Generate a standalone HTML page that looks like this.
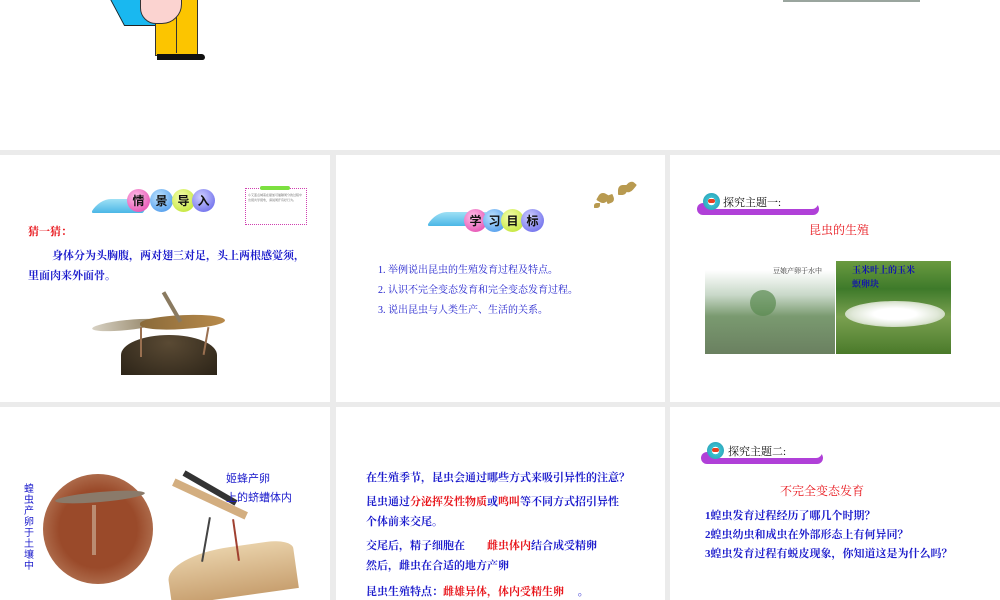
<!DOCTYPE html>
<html><head><meta charset="utf-8"><style>
*{margin:0;padding:0;box-sizing:border-box}
body{width:1000px;height:600px;overflow:hidden;background:#ebebeb;position:relative;font-family:"Liberation Serif","Noto Serif CJK SC","Noto Sans CJK SC",serif}
.c{position:absolute;background:#fff;overflow:hidden}
.a{position:absolute;white-space:nowrap}
.blue{color:#1c1ccc}
.red{color:#e8161c}
.b{font-weight:bold}
.ball{position:absolute;width:23px;height:23px;border-radius:50%;font:bold 12px "Noto Sans CJK SC",sans-serif;color:#111;text-align:center;line-height:23px}
.book{position:absolute;width:52px;height:14px;background:linear-gradient(180deg,#9fe0f5,#4bb6e6);border-radius:40px 4px 4px 8px;transform:skewX(-30deg)}
.pill{position:absolute;height:12px;background:#b040d8;border-radius:6px}
.bf{position:absolute;background:#b89a50;border-radius:50% 10% 50% 10%}
</style></head><body>
<div class="c" style="left:0;top:0;width:1000px;height:150px">
<div style="position:absolute;left:112px;top:-20px;width:40px;height:46px;background:#19b8f0;transform:skewX(28deg);border:1px solid #222"></div>
<div style="position:absolute;left:155px;top:0;width:43px;height:56px;background:#fcc500;border:1px solid #333;border-top:none"></div>
<div style="position:absolute;left:176px;top:0;width:1px;height:53px;background:#333"></div>
<div style="position:absolute;left:140px;top:-8px;width:42px;height:32px;background:#fbd3d0;border:1px solid #333;border-radius:0 0 20px 16px"></div>
<div style="position:absolute;left:157px;top:54px;width:48px;height:6px;background:#111;border-radius:0 4px 3px 0"></div>
<div style="position:absolute;left:783px;top:0;width:137px;height:2px;background:#9aa59e"></div>
</div>

<div class="c" style="left:0;top:155px;width:330px;height:247px">
<div class="book" style="left:95px;top:44px"></div>
<div class="ball" style="left:127px;top:34px;background:radial-gradient(circle at 40% 35%,#ffc0e8,#e03aa8)">情</div>
<div class="ball" style="left:150px;top:34px;background:radial-gradient(circle at 40% 35%,#bfe4ff,#3a8ee8)">景</div>
<div class="ball" style="left:172px;top:34px;background:radial-gradient(circle at 40% 35%,#f6ffb0,#b8e020)">导</div>
<div class="ball" style="left:192px;top:34px;background:radial-gradient(circle at 40% 35%,#d0d0ff,#5a5ae8)">入</div>
<div style="position:absolute;left:245px;top:33px;width:62px;height:37px;border:1px dotted #d040b0;font-size:3px;color:#555;padding:4px 2px;line-height:5px">小艾蓝点城着在提加可插隔周分的过程中出现共学现象，请说周汗有好行为。</div>
<div style="position:absolute;left:260px;top:31px;width:30px;height:4px;background:#7ce040;border-radius:2px"></div>
<div class="a red b" style="left:28px;top:68px;font-size:11px">猜一猜：</div>
<div class="a blue b" style="left:52px;top:92px;font-size:11px">身体分为头胸腹，两对翅三对足，头上两根感觉须，</div>
<div class="a blue b" style="left:28px;top:112px;font-size:11px">里面肉来外面骨。</div>
<div style="position:absolute;left:121px;top:180px;width:96px;height:40px;background:radial-gradient(ellipse at 50% 20%,#5a4a34,#2c2418);border-radius:50% 50% 0 0"></div>
<div style="position:absolute;left:92px;top:165px;width:70px;height:10px;background:linear-gradient(90deg,#d8d2c4,#8a7a5a);border-radius:50%;transform:rotate(-6deg)"></div>
<div style="position:absolute;left:140px;top:160px;width:85px;height:14px;background:linear-gradient(90deg,#8a6a3a,#b88a4a);border-radius:40% 60% 40% 50%;transform:rotate(-4deg)"></div>
<div style="position:absolute;left:170px;top:135px;width:4px;height:34px;background:#8a7a60;transform:rotate(-30deg)"></div>
<div style="position:absolute;left:140px;top:172px;width:2px;height:30px;background:#9a7050"></div>
<div style="position:absolute;left:205px;top:172px;width:2px;height:28px;background:#9a7050;transform:rotate(10deg)"></div>
</div>

<div class="c" style="left:336px;top:155px;width:329px;height:247px">
<div class="book" style="left:95px;top:57px"></div>
<div class="ball" style="left:128px;top:54px;background:radial-gradient(circle at 40% 35%,#ffc0e8,#e03aa8)">学</div>
<div class="ball" style="left:147px;top:54px;background:radial-gradient(circle at 40% 35%,#bfe4ff,#3a8ee8)">习</div>
<div class="ball" style="left:165px;top:54px;background:radial-gradient(circle at 40% 35%,#f6ffb0,#b8e020)">目</div>
<div class="ball" style="left:185px;top:54px;background:radial-gradient(circle at 40% 35%,#d0d0ff,#5a5ae8)">标</div>
<div class="bf" style="left:262px;top:38px;width:10px;height:10px;transform:rotate(30deg)"></div>
<div class="bf" style="left:270px;top:40px;width:8px;height:8px;transform:rotate(-20deg)"></div>
<div class="bf" style="left:282px;top:30px;width:9px;height:10px"></div>
<div class="bf" style="left:290px;top:26px;width:8px;height:12px;transform:rotate(40deg)"></div>
<div class="bf" style="left:258px;top:48px;width:6px;height:5px"></div>
<div class="a blue" style="left:42px;top:106px;font-size:10px">1. 举例说出昆虫的生殖发育过程及特点。</div>
<div class="a blue" style="left:42px;top:126px;font-size:10px">2. 认识不完全变态发育和完全变态发育过程。</div>
<div class="a blue" style="left:42px;top:146px;font-size:10px">3. 说出昆虫与人类生产、生活的关系。</div>
</div>

<div class="c" style="left:670px;top:155px;width:330px;height:247px">
<div class="pill" style="left:27px;top:48px;width:122px"></div>
<div style="position:absolute;left:38px;top:40px;width:110px;height:14px;background:#fff;border-radius:6px"></div>
<div style="position:absolute;left:33px;top:38px;width:17px;height:17px;border-radius:50%;background:radial-gradient(circle,#fff 30%,#39c0d0 32%,#2a9ab0);"></div>
<div style="position:absolute;left:38px;top:44px;width:7px;height:4px;background:#e84020;border-radius:2px"></div>
<div class="a" style="left:53px;top:39px;font-size:11px;color:#111">探究主题一:</div>
<div class="a red" style="left:139px;top:66px;font-size:12px">昆虫的生殖</div>
<div style="position:absolute;left:35px;top:115px;width:130px;height:84px;background:linear-gradient(180deg,#fff 0%,#c8d8c8 30%,#7a9a70 55%,#6a8060 100%)"></div>
<div style="position:absolute;left:80px;top:135px;width:26px;height:26px;border-radius:50%;background:#5a8a50;opacity:.7"></div>
<div class="a" style="left:103px;top:111px;font-size:7px;color:#333">豆娘产卵于水中</div>
<div style="position:absolute;left:166px;top:106px;width:115px;height:93px;background:linear-gradient(180deg,#6a9a40 0%,#3e7a2a 30%,#7aa050 60%,#4a7a2a 100%)"></div>
<div style="position:absolute;left:175px;top:146px;width:100px;height:26px;background:radial-gradient(ellipse,#fff 30%,#e0e8d8 60%,#a0b888);border-radius:50%"></div>
<div class="a" style="left:182px;top:108px;font-size:9px;color:#1010b0;font-weight:bold;line-height:14px">玉米叶上的玉米<br>螟卵块</div>
</div>

<div class="c" style="left:0;top:407px;width:330px;height:193px">
<div class="a blue" style="left:24px;top:75px;font-size:10px;line-height:11px;white-space:normal;width:12px;font-family:'Noto Sans CJK SC',sans-serif">蝗虫产卵于土壤中</div>
<div style="position:absolute;left:43px;top:67px;width:110px;height:110px;border-radius:50%;background:radial-gradient(circle,#9a4a2a 50%,#b07050 75%,#fff 100%)"></div>
<div style="position:absolute;left:55px;top:85px;width:90px;height:10px;background:#8a7a6a;border-radius:50%;transform:rotate(-5deg)"></div>
<div style="position:absolute;left:92px;top:98px;width:4px;height:50px;background:#c8a890;opacity:.7"></div>
<div style="position:absolute;left:168px;top:140px;width:128px;height:50px;background:linear-gradient(180deg,#e8d0a8,#c8a070);border-radius:50% 20% 0 0;transform:rotate(-8deg)"></div>
<div style="position:absolute;left:170px;top:88px;width:80px;height:8px;background:#c89a60;opacity:.8;transform:rotate(25deg)"></div>
<div style="position:absolute;left:180px;top:78px;width:60px;height:6px;background:#333;transform:rotate(30deg)"></div>
<div style="position:absolute;left:205px;top:110px;width:2px;height:45px;background:#444;transform:rotate(10deg)"></div>
<div style="position:absolute;left:235px;top:112px;width:2px;height:42px;background:#a04030;transform:rotate(-8deg)"></div>
<div class="a blue" style="left:226px;top:62px;font-size:11px;line-height:19px;font-family:'Noto Sans CJK SC',sans-serif">姬蜂产卵<br>上的蛴螬体内</div>
</div>

<div class="c" style="left:336px;top:407px;width:329px;height:193px">
<div class="a blue b" style="left:30px;top:62px;font-size:11px">在生殖季节，昆虫会通过哪些方式来吸引异性的注意？</div>
<div class="a blue b" style="left:30px;top:86px;font-size:11px">昆虫通过<span class="red">分泌挥发性物质</span>或<span class="red">鸣叫</span>等不同方式招引异性</div>
<div class="a blue b" style="left:30px;top:106px;font-size:11px">个体前来交尾。</div>
<div class="a blue b" style="left:30px;top:130px;font-size:11px">交尾后，精子细胞在　　<span class="red">雌虫体内</span>结合成受精卵</div>
<div class="a blue b" style="left:30px;top:150px;font-size:11px">然后，雌虫在合适的地方产卵</div>
<div class="a blue b" style="left:30px;top:176px;font-size:11px">昆虫生殖特点：<span class="red">雌雄异体，体内受精生卵</span>　 。</div>
</div>

<div class="c" style="left:670px;top:407px;width:330px;height:193px">
<div class="pill" style="left:31px;top:45px;width:122px"></div>
<div style="position:absolute;left:42px;top:37px;width:110px;height:14px;background:#fff;border-radius:6px"></div>
<div style="position:absolute;left:37px;top:35px;width:17px;height:17px;border-radius:50%;background:radial-gradient(circle,#fff 30%,#39c0d0 32%,#2a9ab0);"></div>
<div style="position:absolute;left:42px;top:41px;width:7px;height:4px;background:#e84020;border-radius:2px"></div>
<div class="a" style="left:58px;top:36px;font-size:11px;color:#111">探究主题二:</div>
<div class="a red" style="left:110px;top:75px;font-size:12px">不完全变态发育</div>
<div class="a blue b" style="left:35px;top:100px;font-size:11px">1蝗虫发育过程经历了哪几个时期？</div>
<div class="a blue b" style="left:35px;top:119px;font-size:11px">2蝗虫幼虫和成虫在外部形态上有何异同？</div>
<div class="a blue b" style="left:35px;top:138px;font-size:11px">3蝗虫发育过程有蜕皮现象，你知道这是为什么吗？</div>
</div>
</body></html>
